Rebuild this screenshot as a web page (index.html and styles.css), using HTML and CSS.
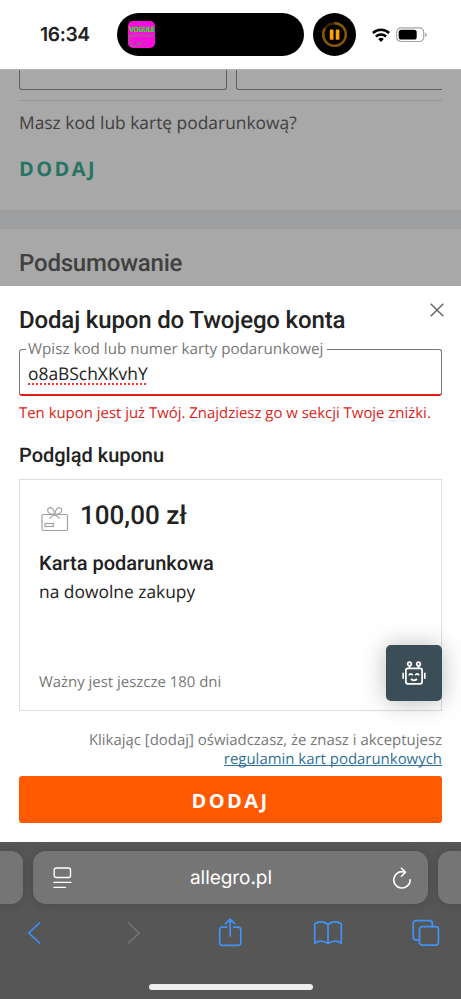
FILE: index.html
```html
<!DOCTYPE html>
<html lang="pl">
<head>
<meta charset="utf-8">
<title>Allegro</title>
<link rel="stylesheet" href="styles.css">
</head>
<body>
<header class="status">
  <span class="clock">16:34</span>
  <div class="island">
    <div class="art">
      <span class="art-title">VOGULE</span>
      <span class="art-sub">DENTYSTYCZNY</span>
      <svg class="art-line" viewBox="0 0 27 15"><path d="M1 0C1 5 3 12 6 11.500L12 8M9.500 7.500 12.500 7.500 11.500 10.500" fill="none" stroke="#777a68" stroke-width="1.100"/><path d="M14 6.500h7M15 8.500h4M14 11h8" stroke="#c52cb4" stroke-width="1" fill="none"/></svg>
    </div>
  </div>
  <div class="player">
    <svg viewBox="0 0 43 43"><circle cx="21.500" cy="21.500" r="11.300" fill="none" stroke="#3a2400" stroke-width="2.400"/><path d="M21.500 10.200A11.300 11.300 0 1 1 12 15.400" fill="none" stroke="#8a5706" stroke-width="2.400"/><rect x="16.800" y="16.500" width="3.700" height="10.300" rx="1" fill="#ff9f0a"/><rect x="22.700" y="16.500" width="3.700" height="10.300" rx="1" fill="#ff9f0a"/></svg>
  </div>
  <svg class="wifi" viewBox="0 0 18 14"><g fill="none" stroke="#000" stroke-width="2.500"><path d="M.9 5A11.600 11.600 0 0 1 17.100 5"/><path d="M3.900 8.700A7.300 7.300 0 0 1 14.100 8.700"/></g><path d="M9 14 6.200 11.100A4 4 0 0 1 11.800 11.100Z"/></svg>
  <svg class="battery" viewBox="0 0 32 16"><rect x=".7" y=".9" width="27" height="13.600" rx="4.300" fill="#fff" stroke="#a5a5a5" stroke-width="1.200"/><rect x="2.700" y="2.800" width="18" height="9.800" rx="2.600"/><path d="M29.200 5.500c2 .6 2 3.800 0 4.400z" fill="#a5a5a5"/></svg>
</header>

<section class="backdrop">
  <div class="cut-fields"><div></div><div class="open"></div></div>
  <div class="rule"></div>
  <p class="question">Masz kod lub kartę podarunkową?</p>
  <p class="add">DODAJ</p>
  <div class="band"></div>
  <h2 class="summary">Podsumowanie</h2>
</section>

<main class="sheet">
  <div class="sheet-head">
    <h1>Dodaj kupon do Twojego konta</h1>
    <svg class="close" viewBox="0 0 14 14"><path d="M.7.7 13.300 13.300M13.300.7.7 13.300" stroke="#666" stroke-width="1.500" fill="none"/></svg>
  </div>
  <div class="field">
    <span class="label">Wpisz kod lub numer karty podarunkowej</span>
    <span class="value">o8aBSchXKvhY</span>
  </div>
  <p class="error">Ten kupon jest już Twój. Znajdziesz go w sekcji Twoje zniżki.</p>
  <h2 class="preview">Podgląd kuponu</h2>
  <article class="card">
    <div class="amount">
      <svg viewBox="0 0 28 26"><g fill="none" stroke="#a2a2a2" stroke-width="1.200"><rect x="1" y="8.500" width="25.500" height="16" rx="1.500"/><rect x="4" y="17.500" width="8.300" height="3"/><path d="M13.700 8.300C9 8.500 6.300 6.500 6.700 3.700 7.500.5 12.800.4 13.700 8.300ZM13.700 8.300C18.400 8.500 21 6.500 20.700 3.700 19.900.5 14.600.4 13.700 8.300ZM13.700 8.300 8.500 12.600M13.700 8.300 18.900 12.600"/></g></svg>
      <strong>100,00 zł</strong>
    </div>
    <h3>Karta podarunkowa</h3>
    <p class="purpose">na dowolne zakupy</p>
    <p class="validity">Ważny jest jeszcze 180 dni</p>
    <button class="bot" aria-label="Czat">
      <svg viewBox="0 0 24 25"><g fill="none" stroke="#fff" stroke-width="1.700"><rect x="3.900" y="7.300" width="16.200" height="15.500" rx="2"/><circle cx="7.500" cy="3" r="1.800"/><circle cx="16.500" cy="3" r="1.800"/><path d="M7.500 4.800V7M16.500 4.800V7M1.200 11.800v6M22.800 11.800v6M6.800 14.200q2.100-2.700 4 0M13.200 14.200q2-2.700 4 0M9 18q3 2.600 6 0"/></g></svg>
    </button>
  </article>
  <div class="terms"><p>Klikając [dodaj] oświadczasz, że znasz i akceptujesz</p><a>regulamin kart podarunkowych</a></div>
  <button class="submit">DODAJ</button>
</main>

<footer class="browser">
  <div class="tabs">
    <div class="tab prev"></div>
    <div class="tab current">
      <svg class="reader" viewBox="0 0 19 22"><g fill="none" stroke="#fff" stroke-width="1.400" stroke-linecap="round"><rect x="1.200" y="1" width="16.300" height="9.500" rx="2"/><path d="M1 15.400h16.800M1 20.400h11.500"/></g></svg>
      <span>allegro.pl</span>
      <svg class="reload" viewBox="0 0 18 22"><g fill="none" stroke="#fff" stroke-width="1.600" stroke-linecap="round" stroke-linejoin="round"><path d="M17.200 12.800A8.200 8.200 0 1 1 12 5.200"/><path d="M8.500 1.200 12.500 5.200 8.500 9.200"/></g></svg>
    </div>
    <div class="tab next"></div>
  </div>
  <nav class="tools">
    <svg viewBox="0 0 28 28"><path d="M18.500 4 7.800 14 18.500 24" /></svg>
    <svg class="off" viewBox="0 0 28 28"><path d="M9.500 4 20.200 14 9.500 24"/></svg>
    <svg viewBox="0 0 28 28"><path d="M9.600 8.200H5.200Q2.700 8.200 2.700 10.700V23.800Q2.700 26.300 5.200 26.300H21.300Q23.800 26.300 23.800 23.800V10.700Q23.800 8.200 21.300 8.200H16.900M13.200 17V.3M8.700 4.700 13.200.2 17.700 4.700"/></svg>
    <svg viewBox="0 0 28 28"><path d="M14 5.600C10.500 2.200 4.500 2.200.7 4.800V24.200C4.500 21.500 10.500 21.500 14 24.600 17.500 21.500 23.500 21.500 27.300 24.200V4.800C23.500 2.200 17.500 2.200 14 5.600V24.600"/></svg>
    <svg viewBox="0 0 28 28"><path d="M7.500 20.800H4Q1.200 20.800 1.200 18V4.500Q1.200 1.700 4 1.700H17.500Q20.300 1.700 20.300 4.500V7.700"/><rect x="7.500" y="7.700" width="19" height="18.400" rx="2.800"/></svg>
  </nav>
  <div class="home"></div>
</footer>
</body>
</html>
```
FILE: styles.css
```css
* { box-sizing: border-box; }
html, body { height: 100%; }
body {
  margin: 0;
  width: 461px;
  display: flex;
  flex-direction: column;
  overflow: hidden;
  background: #fff;
  color: #222;
  font-family: "Open Sans", sans-serif;
  font-size: 17.4px;
  text-rendering: geometricPrecision;
}
h1, h2, h3, p { margin: 0; font-weight: 400; white-space: nowrap; }
h1, h2, h3, strong { font-family: Roboto, sans-serif; font-weight: 500; }
svg { display: block; flex: none; }
button { border: 0; padding: 0; font: inherit; }

.status { height: 69px; flex: none; display: flex; align-items: center; }
.clock { width: 77px; margin-left: 40px; padding-bottom: 1px; font: 600 19.2px/24px Inter, sans-serif; letter-spacing: -.35px; }
.island { width: 187px; height: 43px; border-radius: 22px; background: #000; display: flex; align-items: center; padding-left: 11px; }
.art { width: 27px; height: 27px; border-radius: 5px; background: #ff0be0; display: flex; flex-direction: column; align-items: center; overflow: hidden; padding-top: 5px; white-space: nowrap; }
.art-title { font-size: 7.4px; line-height: 9px; font-weight: 800; letter-spacing: -.9px; color: #35d432; }
.art-sub { font-size: 3.6px; line-height: 4px; font-weight: 700; letter-spacing: -.35px; color: #827781; }
.art-line { width: 27px; height: 15px; margin-top: -4px; }
.player { width: 43px; height: 43px; margin-left: 9px; border-radius: 50%; background: #000; }
.wifi { width: 18px; height: 14px; margin-left: 16px; }
.battery { width: 32px; height: 16px; margin-left: 6px; }

.backdrop { height: 217px; flex: none; padding: 0 19px; background: #a8a8a8; color: #404040; border-top: 1px solid #b4b4b4; }
.cut-fields { display: flex; gap: 9px; height: 20px; }
.cut-fields div { flex: 1; border: solid #616161; border-width: 0 1px 1px; border-radius: 0 0 3px 3px; }
.cut-fields .open { border-right: 0; border-radius: 0 0 0 3px; }
.rule { height: 1px; margin-top: 10px; background: #969696; }
.question { margin-top: 10px; line-height: 24px; }
.add { margin-top: 22px; font-size: 20px; line-height: 24px; font-weight: 700; letter-spacing: 2.4px; color: #267464; }
.band { height: 19px; margin: 29px -19px 0; background: #9e9fa1; }
.summary { margin-top: 18px; font-size: 24px; line-height: 32px; letter-spacing: -.2px; }

.sheet { height: 556px; flex: none; padding: 18px 19px 0; }
.sheet-head { display: flex; justify-content: space-between; }
.sheet-head h1 { font-size: 24px; line-height: 32px; letter-spacing: -.15px; }
.close { width: 14px; height: 14px; margin: -1px -2px 0 0; }
.field { height: 47px; margin-top: 13px; border: 1px solid #777; border-bottom: 2px solid #df1f17; border-radius: 3px; padding-left: 6px; display: flex; flex-direction: column; align-items: flex-start; white-space: nowrap; }
.label { margin-top: -13px; padding: 0 4px 0 2px; background: #fff; color: #777; font-size: 15.2px; line-height: 24px; }
.value { margin: 1px 0 0 2px; line-height: 24px; text-decoration: underline dotted #ee3430 2px; text-underline-offset: 3px; text-decoration-skip-ink: none; }
.error { margin-top: 5px; font-size: 14.93px; line-height: 24px; color: #d91e18; }
.preview { margin-top: 18px; font-size: 20px; line-height: 24px; }
.card { height: 232px; margin-top: 12px; border: 1px solid #ddd; padding: 20px 19px; position: relative; }
.amount { display: flex; gap: 11px; height: 32px; }
.amount svg { width: 28px; height: 26px; margin: 6px 0 0 2px; }
.amount strong { font-size: 26px; line-height: 33px; }
.card h3 { margin-top: 19px; font-size: 20px; line-height: 24px; }
.purpose { margin-top: 5px; line-height: 24px; }
.validity { margin-top: 66px; font-size: 14.93px; line-height: 24px; color: #777; }
.bot { position: absolute; right: -1px; bottom: 9px; width: 56px; height: 56px; border-radius: 5px; background: #3b4d56; display: grid; place-items: center; box-shadow: 0 1px 24px rgb(0 0 0 / 28%); }
.bot svg { width: 24px; height: 25px; }
.terms { margin-top: 20px; font-size: 14.95px; line-height: 18.7px; text-align: right; color: #777; }
.terms a { color: #31719a; text-decoration: underline; text-decoration-skip-ink: none; }
.submit { display: block; width: 100%; height: 47px; margin-top: 8px; border-radius: 3px; background: #ff5a00; color: #fff; font-size: 20px; font-weight: 700; letter-spacing: 2.4px; padding-top: 1px; }

.browser { height: 157px; flex: none; overflow: hidden; background: #565656; }
.tabs { display: flex; gap: 10px; height: 53px; margin-top: 9px; }
.tab { background: #757575; box-shadow: 0 1px 10px rgb(0 0 0 / 14%); }
.prev { width: 23px; border-radius: 0 12px 12px 0; }
.next { width: 23px; border-radius: 12px 0 0 12px; }
.current { flex: 1; border-radius: 13px; display: flex; align-items: center; justify-content: space-between; padding: 0 17px 0 20px; color: #fff; font: 19px Inter, sans-serif; letter-spacing: -.05px; }
.current span { margin-right: 3px; }
.reader { width: 19px; height: 22px; }
.reload { width: 18px; height: 22px; }
.tools { display: flex; justify-content: space-between; margin: 15px 21px 0; }
.tools svg { width: 28px; height: 28px; overflow: visible; fill: none; stroke: #4192f7; stroke-width: 1.700; stroke-linecap: round; stroke-linejoin: round; }
.tools .off { stroke: #747474; }
.home { width: 164px; height: 6px; margin: 37px auto 0; border-radius: 3px; background: #eee; }
```
